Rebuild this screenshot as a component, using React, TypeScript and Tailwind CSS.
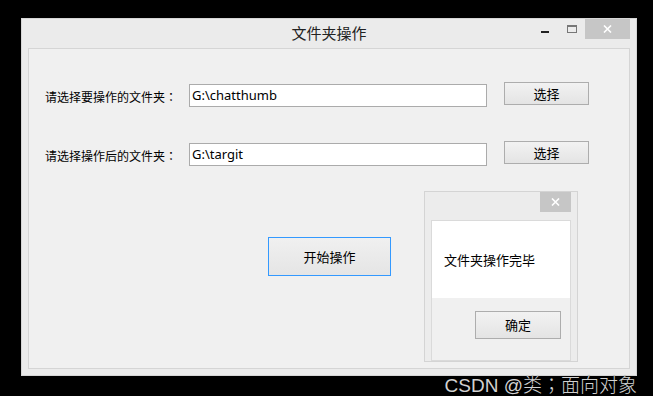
import React from "react";

const cjk = { fontFamily: '"Noto Sans CJK SC", "Noto Sans", sans-serif' };
const latin = { fontFamily: '"Noto Sans", "Noto Sans CJK SC", sans-serif' };
const tc = { fontFamily: '"Noto Sans CJK TC", sans-serif' };

function CloseGlyph() {
  return (
    <svg width="9" height="8" viewBox="0 0 9 8" fill="none">
      <path d="M1 0.5 L8 7.5 M8 0.5 L1 7.5" stroke="white" strokeWidth="1.6" />
    </svg>
  );
}

function WinButton({ label, className }: { label: string; className: string }) {
  return (
    <button
      className={
        "flex items-center justify-center border border-[#adadad] bg-gradient-to-b from-[#f2f2f2] to-[#e4e4e4] text-[13px] text-black " +
        className
      }
      style={cjk}
    >
      {label}
    </button>
  );
}

function FolderRow({ label, value }: { label: string; value: string }) {
  return (
    <div className="flex items-start">
      <span className="w-[144px] pt-[5px] text-[12px] leading-[16px] text-black" style={cjk}>
        {label}
        <span style={tc}>：</span>
      </span>
      <div
        className="flex h-[23px] w-[298px] items-center border border-[#ababab] bg-white pl-[2px] text-[13px] text-black"
        style={latin}
      >
        {value}
      </div>
      <WinButton label="选择" className="ml-[17px] -mt-[2px] h-[23px] w-[85px]" />
    </div>
  );
}

export default function App() {
  return (
    <div className="relative h-[396px] w-[653px] overflow-hidden bg-black pl-[21px] pt-[18px]">
      <div className="flex h-[358px] w-[616px] flex-col border border-[#d6d6d6] bg-[#ebebeb]">
        {/* title bar */}
        <div className="relative flex h-[29px] items-center justify-center">
          <span className="text-[15px] text-[#222]" style={cjk}>
            文件夹操作
          </span>
          <div className="absolute right-[6px] top-0 flex items-start">
            <div className="mr-[18px] mt-[12px] h-[2px] w-[8px] bg-[#222]" />
            <div className="mr-[8px] mt-[6px] h-[8px] w-[10px] border border-t-2 border-[#777]" />
            <div className="flex h-[20px] w-[45px] items-center justify-center bg-[#c6c6c6]">
              <CloseGlyph />
            </div>
          </div>
        </div>
        {/* client area */}
        <div className="mx-[6px] mb-[6px] flex flex-1 flex-col border border-[#d5d5d5] bg-[#f0f0f0] pl-[16px] pt-[35px]">
          <FolderRow label="请选择要操作的文件夹" value="G:\chatthumb" />
          <div className="h-[36px]" />
          <FolderRow label="请选择操作后的文件夹" value="G:\targit" />
          <div className="h-[71px]" />
          <button
            className="ml-[223px] flex h-[39px] w-[123px] items-center justify-center border border-[#3399ff] bg-gradient-to-b from-[#f0f0f0] to-[#e5e5e5] text-[13px] text-black"
            style={cjk}
          >
            开始操作
          </button>
        </div>
      </div>

      {/* message box */}
      <div className="absolute left-[424px] top-[191px] flex h-[171px] w-[154px] flex-col border border-[#d4d4d4] bg-[#ececec]">
        <div className="flex h-[28px] justify-end pr-[6px]">
          <div className="flex h-[20px] w-[31px] items-center justify-center bg-[#c6c6c6]">
            <CloseGlyph />
          </div>
        </div>
        <div className="mx-[6px] flex flex-1 flex-col border border-[#dadada] bg-[#f0f0f0]">
          <div className="flex h-[77px] items-center bg-white pl-[12px] text-[13px] text-black" style={cjk}>
            文件夹操作完毕
          </div>
          <WinButton label="确定" className="ml-[43px] mt-[13px] h-[28px] w-[86px]" />
        </div>
      </div>

      {/* watermark */}
      <div
        className="absolute right-[16px] top-[376px] text-[19px] leading-[19px] font-light text-[#d2d2d2]"
        style={{
          fontFamily: '"Liberation Sans", "Noto Sans CJK TC", sans-serif',
          textShadow: "0 0 1px rgba(0,0,0,0.6)",
        }}
      >
        CSDN @类；面向对象
      </div>
    </div>
  );
}
